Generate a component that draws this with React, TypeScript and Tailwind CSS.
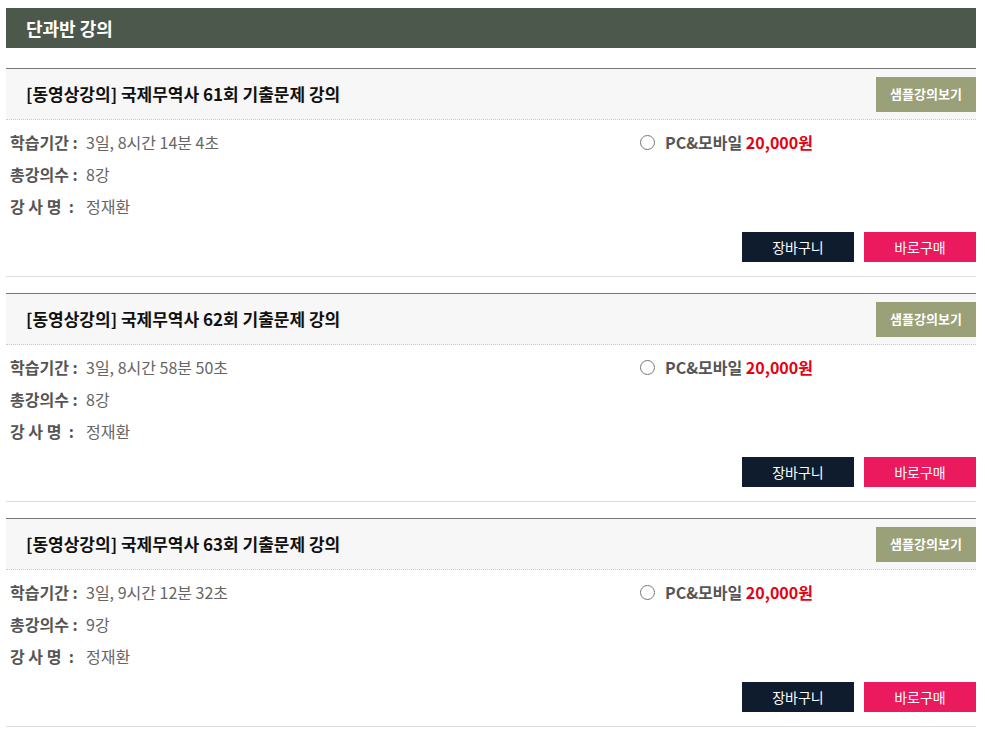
import type { FC } from 'react';

type Course = {
  round: number;
  period: string;
  count: string;
  teacher: string;
};

const courses: Course[] = [
  { round: 61, period: '3일, 8시간 14분 4초', count: '8강', teacher: '정재환' },
  { round: 62, period: '3일, 8시간 58분 50초', count: '8강', teacher: '정재환' },
  { round: 63, period: '3일, 9시간 12분 32초', count: '9강', teacher: '정재환' },
];

const font = {
  fontFamily: '"Noto Sans CJK KR", "Noto Sans", sans-serif',
};

const InfoRow: FC<{ label: string; value: string }> = ({ label, value }) => (
  <div className="flex h-[32px] items-center text-[16px]">
    <span className="w-[76px] whitespace-pre font-bold text-[#555]">{label}</span>
    <span className="text-[#666]">{value}</span>
  </div>
);

const CourseCard: FC<{ course: Course; first: boolean }> = ({ course, first }) => (
  <div
    className={
      first
        ? 'mt-[20px] border-t border-b border-t-[#777] border-b-[#ddd]'
        : 'mt-[16px] border-t border-b border-t-[#777] border-b-[#ddd]'
    }
  >
    <div className="flex h-[51px] items-center justify-between border-b border-dotted border-[#ccc] bg-[#f7f7f7]">
      <h3 className="pl-[20px] text-[17px] font-bold text-[#111]">
        [동영상강의] 국제무역사 {course.round}회 기출문제 강의
      </h3>
      <button className="h-[35px] w-[100px] bg-[#9aa077] text-[13px] font-bold text-white">
        샘플강의보기
      </button>
    </div>
    <div className="pt-[6px] pb-[14px]">
      <div className="flex">
        <div className="w-[634px] pl-[4px]">
          <InfoRow label="학습기간 :" value={course.period} />
          <InfoRow label="총강의수 :" value={course.count} />
          <InfoRow label="강 사 명  :" value={course.teacher} />
        </div>
        <label className="flex h-[32px] items-center gap-[10px] text-[16px] font-bold">
          <span className="h-[15px] w-[15px] rounded-full border border-[#777] bg-white" />
          <span className="text-[#555]">
            PC&amp;모바일 <span className="text-[#e60012]">20,000원</span>
          </span>
        </label>
      </div>
      <div className="mt-[10px] flex justify-end gap-[10px]">
        <button className="h-[30px] w-[112px] bg-[#0f1c2e] text-[14px] text-white">장바구니</button>
        <button className="h-[30px] w-[112px] bg-[#eb1a5f] text-[14px] text-white">바로구매</button>
      </div>
    </div>
  </div>
);

export default function App() {
  return (
    <div className="min-h-screen bg-white" style={font}>
      <div className="ml-[6px] w-[970px] pt-[8px]">
        <div className="flex h-[40px] items-center bg-[#4b584b] pl-[20px] text-[18px] font-bold text-white">
          단과반 강의
        </div>
        {courses.map((c, i) => (
          <CourseCard key={c.round} course={c} first={i === 0} />
        ))}
      </div>
    </div>
  );
}
